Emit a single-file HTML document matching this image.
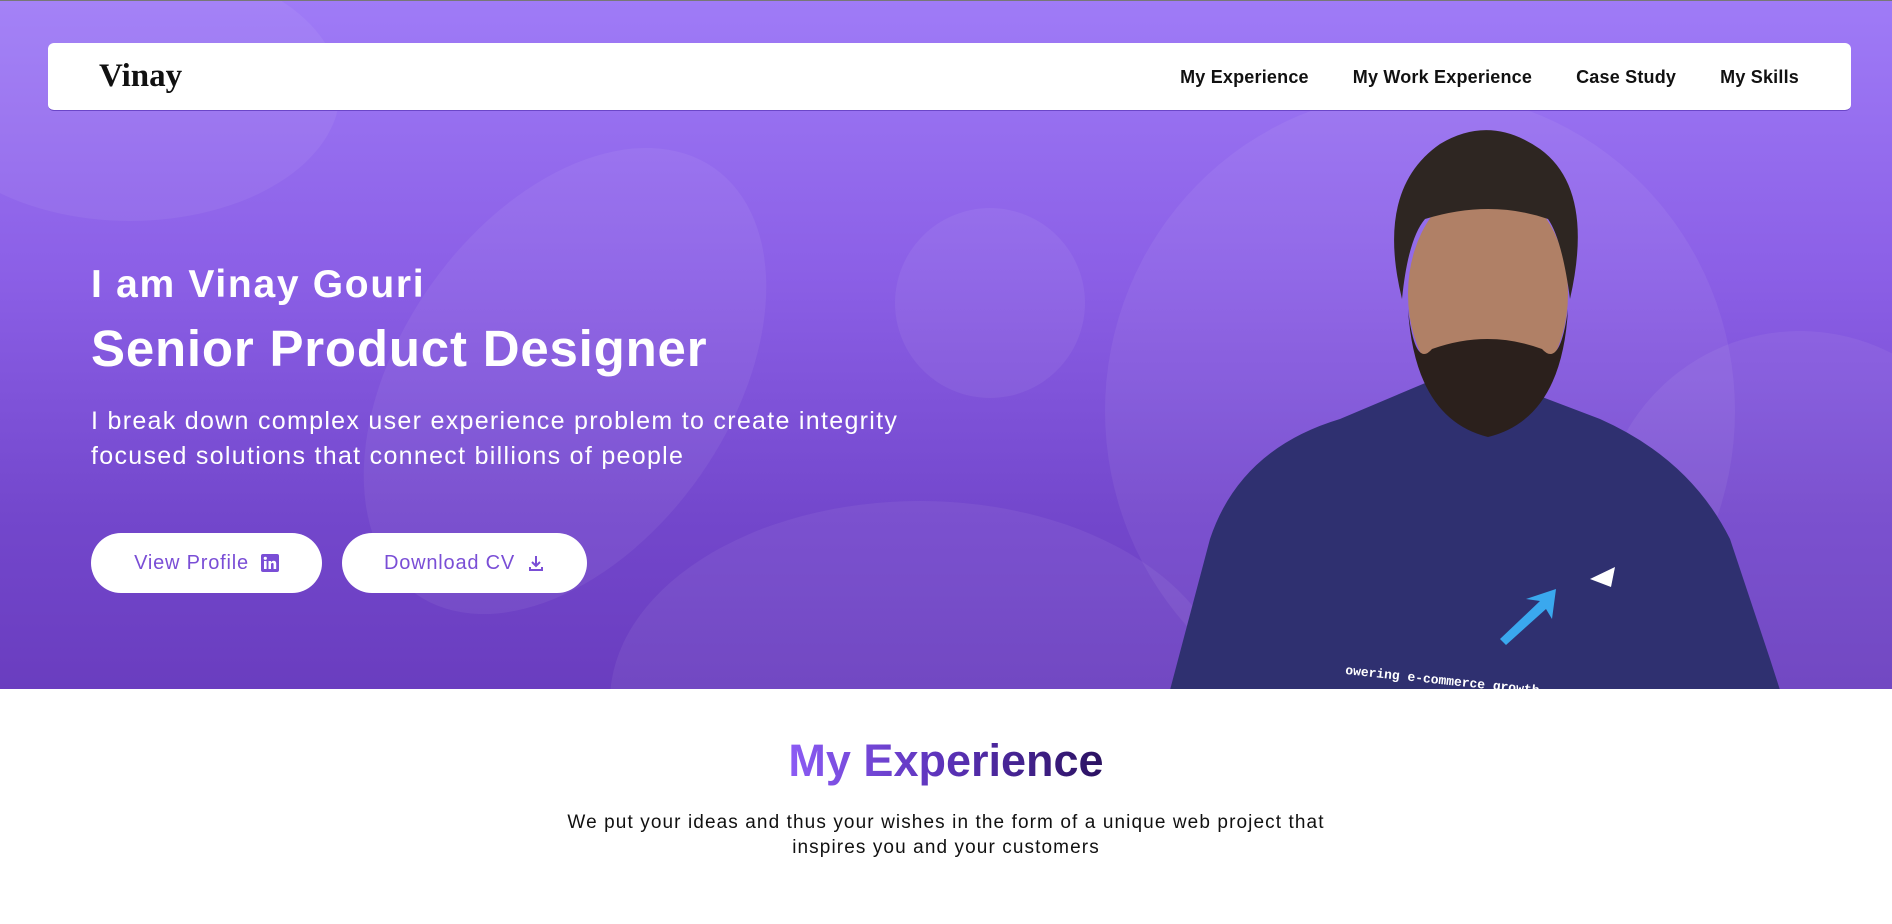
<!DOCTYPE html>
<html><head><meta charset="utf-8"><style>
*{margin:0;padding:0;box-sizing:border-box}
body{width:1892px;height:924px;overflow:hidden;background:#fff;font-family:"Liberation Sans",sans-serif;position:relative}
.hero{position:absolute;left:0;top:0;width:1892px;height:689px;background:linear-gradient(180deg,#9f7bf7 0%,#8b5fe6 40%,#7347cc 75%,#6a3dbf 100%);overflow:hidden;border-top:1px solid #777}
.blob{position:absolute;border-radius:50%;background:rgba(255,255,255,0.06)}
.nav{position:absolute;left:48px;top:42px;width:1803px;height:68px;background:#fff;border-radius:6px;border-bottom:1px solid #6b46c8}
.logo{position:absolute;left:51px;top:15px;font-family:"Liberation Serif",serif;font-weight:bold;font-size:33px;color:#111}
.links{position:absolute;right:52px;top:24px;font-size:18px;font-weight:bold;color:#111;letter-spacing:0.2px}
.links span{margin-left:44px}
h1{position:absolute;left:91px;top:262px;color:#fff;font-size:39px;font-weight:bold;letter-spacing:1.7px}
h2{position:absolute;left:91px;top:318px;color:#fff;font-size:51px;font-weight:bold;letter-spacing:0.8px}
.p{position:absolute;left:91px;top:403px;color:#fff;font-size:25px;line-height:35px;width:1000px;letter-spacing:1.3px}
.btn{position:absolute;top:532px;height:60px;background:#fff;border-radius:30px;color:#7a4ed6;font-size:20px;letter-spacing:0.8px;display:flex;align-items:center;justify-content:center;gap:12px}
.t1{position:absolute;left:0;width:1892px;top:735px;text-align:center;font-size:45px;font-weight:bold}
.t1 span{background:linear-gradient(90deg,#8c5cf5,#5b32b8 50%,#2a1160);-webkit-background-clip:text;background-clip:text;color:transparent}
.sub{position:absolute;left:0;width:1892px;top:810px;text-align:center;font-size:19px;line-height:25px;color:#111;letter-spacing:1.1px}
</style></head><body>
<div class="hero">
<div class="blob" style="left:-80px;top:-40px;width:420px;height:260px"></div>
<div class="blob" style="left:400px;top:120px;width:330px;height:520px;transform:rotate(35deg)"></div>
<div class="blob" style="left:895px;top:207px;width:190px;height:190px"></div>
<div class="blob" style="left:1105px;top:90px;width:630px;height:640px"></div>
<div class="blob" style="left:610px;top:500px;width:620px;height:400px"></div>
<div class="blob" style="left:1600px;top:330px;width:400px;height:400px"></div>
<svg style="position:absolute;left:1170px;top:118px" width="610" height="571" viewBox="0 0 610 571">
<path d="M0 571 L40 420 Q70 330 170 300 L260 262 L330 262 L430 300 Q520 340 560 420 L600 540 L610 571 Z" fill="#2f3070"/>
<ellipse cx="318" cy="175" rx="80" ry="110" fill="#b08066"/>
<path d="M238 190 Q245 300 318 318 Q392 300 398 190 Q390 250 372 230 Q318 210 262 230 Q245 250 238 190Z" fill="#2b201c"/>
<path d="M232 180 Q205 70 270 25 Q320 -5 370 30 Q425 70 400 180 Q392 120 378 100 Q320 80 255 100 Q238 120 232 180Z" fill="#2e2622"/>
<path d="M420 460 l25 -12 l-4 20z" fill="#fff"/>
<path d="M330 520 l40 -38 l-14 -2 l30 -10 l-4 30 l-6 -10 l-40 36z" fill="#3aa8ee"/>
<text x="175" y="555" fill="#fff" font-size="13" font-weight="bold" font-family="Liberation Mono,monospace" transform="rotate(6 175 555)">owering e-commerce growth</text>
</svg>
<div class="nav"><div class="logo">Vinay</div>
<div class="links"><span>My Experience</span><span>My Work Experience</span><span>Case Study</span><span>My Skills</span></div></div>
<h1>I am Vinay Gouri</h1>
<h2>Senior Product Designer</h2>
<div class="p">I break down complex user experience problem to create integrity<br>focused solutions that connect billions of people</div>
<div class="btn" style="left:91px;width:231px">View Profile <svg width="18" height="18" viewBox="0 0 18 18"><rect width="18" height="18" rx="2" fill="#7a4ed6"/><rect x="3" y="7" width="2.6" height="8" fill="#fff"/><circle cx="4.3" cy="4.3" r="1.6" fill="#fff"/><path d="M7.5 7h2.5v1.2q1-1.5 2.8-1.5 2.4 0 2.4 3V15h-2.6v-4.6q0-1.5-1.2-1.5t-1.4 1.5V15H7.5z" fill="#fff"/></svg></div>
<div class="btn" style="left:342px;width:245px">Download CV <svg width="18" height="18" viewBox="0 0 18 18" fill="none" stroke="#7a4ed6" stroke-width="2"><path d="M9 2v9M5 8l4 4 4-4M3 13v3h12v-3"/></svg></div>
</div>
<div class="t1"><span>My Experience</span></div>
<div class="sub">We put your ideas and thus your wishes in the form of a unique web project that<br>inspires you and your customers</div>
</body></html>
